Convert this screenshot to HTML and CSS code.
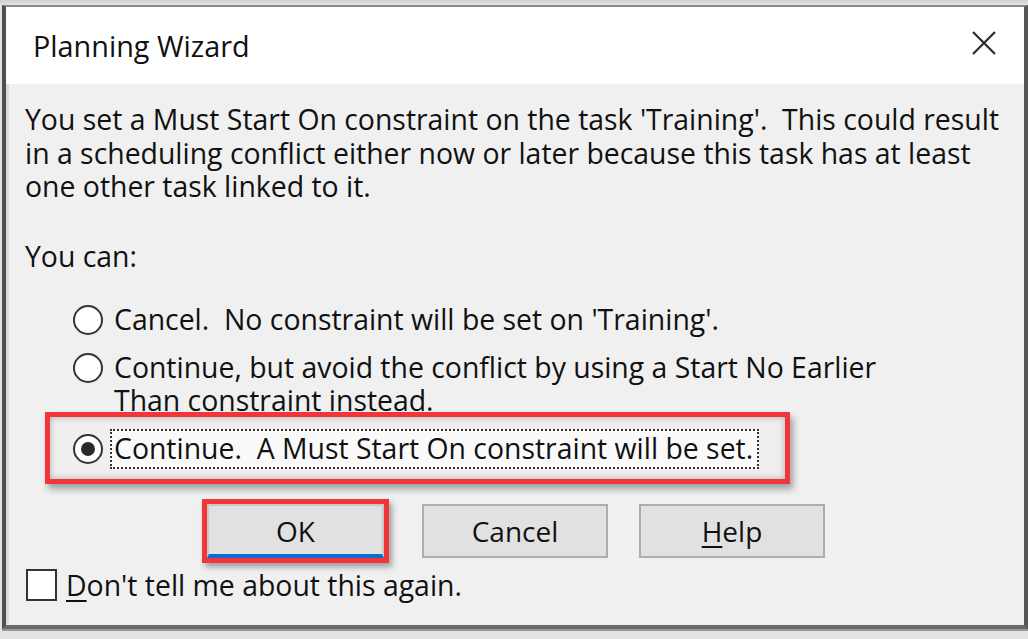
FILE: index.html
```html
<!DOCTYPE html>
<html>
<head>
<meta charset="utf-8">
<link rel="stylesheet" href="styles.css">
</head>
<body>
<div class="screen">
  <div class="dialog">
    <div class="titlebar">
      <span class="title">Planning Wizard</span>
      <svg class="close" width="24" height="24" viewBox="0 0 24 24"><path d="M1 1 L23 23 M23 1 L1 23" stroke="#2b2b2b" stroke-width="2.2" fill="none"/></svg>
    </div>
    <div class="body">
      <p class="msg">You set a Must Start On constraint on the task 'Training'.  This could result<br>in a scheduling conflict either now or later because this task has at least<br>one other task linked to it.</p>
      <p class="youcan">You can:</p>
      <div class="options">
        <div class="opt"><span class="radio"></span><span class="label">Cancel.  No constraint will be set on 'Training'.</span></div>
        <div class="opt"><span class="radio"></span><span class="label">Continue, but avoid the conflict by using a Start No Earlier<br>Than constraint instead.</span></div>
        <div class="highlight">
          <div class="opt sel"><span class="radio on"></span><span class="label focus">Continue.  A Must Start On constraint will be set.</span></div>
        </div>
      </div>
      <div class="buttons">
        <div class="okwrap"><button class="btn default">OK</button></div>
        <button class="btn">Cancel</button>
        <button class="btn help"><u>H</u>elp</button>
      </div>
      <div class="check"><span class="box"></span><span class="label"><u>D</u>on't tell me about this again.</span></div>
    </div>
  </div>
</div>
</body>
</html>
```

FILE: styles.css
```css
html, body {
  margin: 0;
  padding: 0;
}
body {
  width: 1028px;
  height: 639px;
  overflow: hidden;
  background: #d9d9d9;
  font-family: "Open Sans", "Noto Sans", sans-serif;
  color: #111;
}
.screen {
  padding: 5px 0 0 2px;
  height: 634px;
  background: linear-gradient(#cfcfcf, #e4e4e4 5px);
}
.dialog {
  width: 1018px;
  height: 618px;
  border-left: 4px solid #505050;
  border-top: 2px solid #8a8a8a;
  border-right: 4px solid #555;
  border-bottom: 4px solid #6a6a6a;
  background: #f0f0f0;
  box-shadow: inset 3px 0 0 #dcdcdc, 0 2px 0 #9a9a9a;
  display: flex;
  flex-direction: column;
}
.titlebar {
  height: 77px;
  background: #fff;
  display: flex;
  align-items: center;
  justify-content: space-between;
  padding: 0 28px 0 27px;
  flex-shrink: 0;
}
.title {
  font-size: 28.8px;
  color: #111;
  margin-top: 0;
}
.close {
  margin-top: -5px;
}
.body {
  padding: 19px 0 0 19px;
  font-size: 28.4px;
  line-height: 33.5px;
}
.msg, .youcan, .label {
  white-space: pre;
}
.msg {
  margin: 0;
}
.youcan {
  margin: 36px 0 0 0;
}
.options {
  margin: 30px 0 0 0;
}
.opt {
  display: flex;
  align-items: flex-start;
  margin-left: 48px;
  margin-bottom: 14px;
}
.radio {
  width: 26px;
  height: 26px;
  border: 2px solid #333;
  border-radius: 50%;
  background: #fff;
  margin-top: 2px;
  margin-right: 11px;
  flex-shrink: 0;
  display: flex;
  align-items: center;
  justify-content: center;
}
.radio.on::after {
  content: "";
  width: 14px;
  height: 14px;
  border-radius: 50%;
  background: #2a2a2a;
}
.highlight {
  position: relative;
  margin: -20px 0 0 20px;
  width: 735px;
  height: 50px;
  padding-top: 12px;
  border: 5px solid #f0353b;
  box-shadow: 3px 5px 7px rgba(0,0,0,0.35), inset 0 0 7px rgba(0,0,0,0.28);
  background: #efefef;
  display: flex;
  align-items: flex-start;
}
.opt.sel {
  margin: 0 0 0 23px;
  align-items: center;
}
.opt.sel .radio {
  margin-top: 0;
  margin-right: 7px;
}
.focus {
  border: 2px dotted #333;
  padding: 1px 4px 2px 2px;
  background: #fafafa;
}
.buttons {
  display: flex;
  align-items: center;
  gap: 33px;
  margin: 15px 0 0 177px;
}
.okwrap {
  border: 5px solid #f0353b;
  box-shadow: 3px 4px 6px rgba(0,0,0,0.35);
  width: 177px;
  height: 54px;
}
.btn {
  font-family: inherit;
  font-size: 28px;
  color: #111;
  width: 186px;
  height: 54px;
  background: #e1e1e1;
  border: 2px solid #adadad;
  padding: 0;
}
.btn.help {
  margin-left: -2px;
}
.btn.default {
  width: 177px;
  height: 54px;
  border: 2px solid #c7c7c7;
  border-bottom: 4px solid #0a6fd2;
  padding-top: 3px;
}
.btn u, .check u {
  text-decoration-thickness: 2px;
  text-underline-offset: 4px;
}
.check {
  display: flex;
  align-items: center;
  margin: 6px 0 0 1px;
}
.box {
  width: 27px;
  height: 28px;
  border: 2px solid #333;
  background: #fff;
  margin-right: 9px;
}
```
